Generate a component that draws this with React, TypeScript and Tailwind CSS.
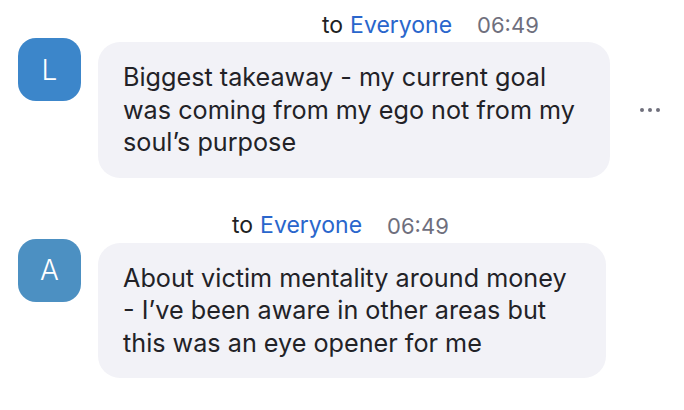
// Chat transcript - two messages sent "to Everyone"

const FONT = "font-['Inter','Noto_Sans',sans-serif]"

interface Message {
  initial: string
  avatarColor: string
  nameWidth: string
  lines: string[]
  bubbleWidth: string
  showMore?: boolean
}

const messages: Message[] = [
  {
    initial: 'L',
    avatarColor: 'bg-[#3c86ca]',
    nameWidth: 'w-[224px]',
    lines: [
      'Biggest takeaway - my current goal',
      'was coming from my ego not from my',
      'soul\u2019s purpose',
    ],
    bubbleWidth: 'w-[512px]',
    showMore: true,
  },
  {
    initial: 'A',
    avatarColor: 'bg-[#4c90c2]',
    nameWidth: 'w-[134px]',
    lines: [
      'About victim mentality around money',
      '- I\u2019ve been aware in other areas but',
      'this was an eye opener for me',
    ],
    bubbleWidth: 'w-[508px]',
  },
]

function ChatMessage({ msg }: { msg: Message }) {
  return (
    <div className="flex flex-col">
      {/* Header: sender name is blanked out */}
      <div className="flex h-[26px] items-center pl-[98px] text-[23px] leading-none">
        <span className={msg.nameWidth} />
        <span className="text-[#1f1f24]">to</span>
        <span className="ml-[7px] text-[#2a66cc]">Everyone</span>
        <span className="ml-[25px] text-[22px] text-[#6f6f7d]">06:49</span>
      </div>

      {/* Avatar + bubble */}
      <div className="flex items-start pl-[18px]">
        <div
          className={`flex h-[63px] w-[63px] shrink-0 items-center justify-center rounded-[18px] ${msg.avatarColor} text-[28px] font-light text-white`}
        >
          {msg.initial}
        </div>
        <div
          className={`ml-[17px] mt-[4px] ${msg.bubbleWidth} rounded-[22px] bg-[#f2f2f7] px-[25px] py-[19px] text-[25.2px] leading-[32.5px] text-[#222227]`}
        >
          {msg.lines.map((line) => (
            <div key={line} className="whitespace-nowrap">
              {line}
            </div>
          ))}
        </div>
        {msg.showMore && (
          <div className="ml-[30px] mt-[70px] flex gap-[4.5px]">
            <span className="h-[3.5px] w-[3.5px] rounded-full bg-[#70707c]" />
            <span className="h-[3.5px] w-[3.5px] rounded-full bg-[#70707c]" />
            <span className="h-[3.5px] w-[3.5px] rounded-full bg-[#70707c]" />
          </div>
        )}
      </div>
    </div>
  )
}

export default function App() {
  return (
    <div className={`h-[410px] w-[684px] overflow-hidden bg-white pt-[12px] ${FONT}`}>
      <div className="flex flex-col gap-[35px]">
        {messages.map((m) => (
          <ChatMessage key={m.initial} msg={m} />
        ))}
      </div>
    </div>
  )
}
